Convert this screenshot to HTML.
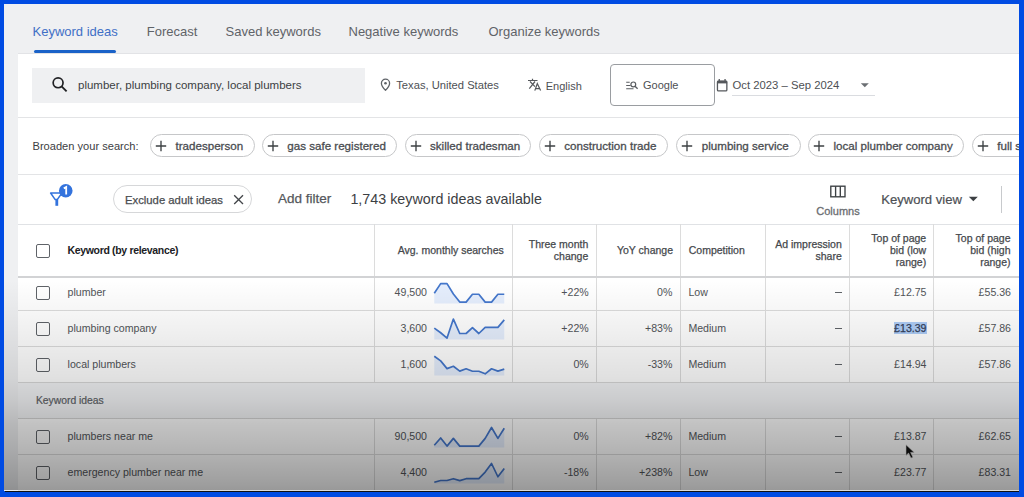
<!DOCTYPE html>
<html><head><meta charset="utf-8"><style>
html,body{margin:0;padding:0;}
body{width:1024px;height:497px;overflow:hidden;position:relative;background:#004be3;font-family:"Liberation Sans", sans-serif;}
.r{position:absolute;}
.t{position:absolute;white-space:nowrap;}
#frame{position:absolute;left:0;top:0;width:1024px;height:497px;overflow:hidden;}
#clip{position:absolute;left:0;top:0;width:1019px;height:490.5px;overflow:hidden;}
#shade{position:absolute;left:4px;top:4px;width:1015px;height:486px;pointer-events:none;
background:linear-gradient(to bottom, rgba(0,0,0,0) 0px, rgba(0,0,0,0) 276px, rgba(0,0,0,0.03) 303px, rgba(0,0,0,0.075) 338px, rgba(0,0,0,0.12) 374px, rgba(0,0,0,0.17) 396px, rgba(0,0,0,0.24) 420px, rgba(0,0,0,0.295) 446px, rgba(0,0,0,0.38) 480px, rgba(0,0,0,0.40) 486px);}
</style></head><body>
<div id="clip">
<div class="r" style="left:4px;top:4px;width:1015px;height:487px;background:#eff0f2;"></div>
<div class="r" style="left:18px;top:54px;width:1001px;height:437px;background:#ffffff;"></div>
<div class="r" style="left:18px;top:52.5px;width:1001px;height:1.5px;background:#e2e3e6;"></div>
<div class="t" style="top:25.00px;font-size:13px;line-height:13px;color:#3f6fc6;left:32.50px;">Keyword ideas</div>
<div class="r" style="left:34px;top:50px;width:82px;height:3px;background:#1a62c8;border-radius:1.5px;"></div>
<div class="t" style="top:25.00px;font-size:13px;line-height:13px;color:#5f6368;left:146.75px;">Forecast</div>
<div class="t" style="top:25.00px;font-size:13px;line-height:13px;color:#5f6368;left:225.50px;">Saved keywords</div>
<div class="t" style="top:25.00px;font-size:13px;line-height:13px;color:#5f6368;left:348.50px;">Negative keywords</div>
<div class="t" style="top:25.00px;font-size:13px;line-height:13px;color:#5f6368;left:488.50px;">Organize keywords</div>
<div class="r" style="left:32px;top:68px;width:333px;height:35px;background:#eff0f2;"></div>
<svg class="r" style="left:50px;top:75px;" width="20" height="20" viewBox="0 0 20 20"><circle cx="8.1" cy="7.8" r="4.95" fill="none" stroke="#202124" stroke-width="1.7"/><line x1="11.6" y1="11.3" x2="16.6" y2="16.3" stroke="#202124" stroke-width="1.9"/></svg>
<div class="t" style="top:79.87px;font-size:11.5px;line-height:11.5px;color:#3c4043;left:78.00px;">plumber, plumbing company, local plumbers</div>
<svg class="r" style="left:379px;top:78.2px;" width="13" height="13" viewBox="0 0 13 13"><path d="M6.5 1.2c-2.3 0-4.1 1.8-4.1 4.1 0 3 4.1 6.9 4.1 6.9s4.1-3.9 4.1-6.9c0-2.3-1.8-4.1-4.1-4.1z" fill="none" stroke="#5f6368" stroke-width="1.3"/><circle cx="6.5" cy="5.3" r="1.3" fill="#5f6368"/></svg>
<div class="t" style="top:80.02px;font-size:11.2px;line-height:11.2px;color:#4d5054;left:396.25px;">Texas, United States</div>
<svg class="r" style="left:528px;top:78px;" width="15" height="15" viewBox="0 0 15 15"><path d="M0 2.5h9.5M4.5 0.8v1.7M2 3.5l5 5.1M7 3.5l-5.7 7.1" fill="none" stroke="#55585c" stroke-width="1.2"/><path d="M6.8 12.6l2.5-7 3.3 7M7.6 10.6h4.2" fill="none" stroke="#55585c" stroke-width="1.2"/></svg>
<div class="t" style="top:80.69px;font-size:11px;line-height:11px;color:#4d5054;left:545.75px;">English</div>
<div class="r" style="left:610px;top:64px;width:103px;height:40px;border:1px solid #9a9da1;border-radius:4px;background:#fff;"></div>
<svg class="r" style="left:625px;top:80px;" width="14" height="11" viewBox="0 0 14 11"><path d="M1.2 2.2h3.5M1.2 5.5h4.3M1.2 8.8h7.3" stroke="#5a5d61" stroke-width="1.1"/><circle cx="8.3" cy="4.4" r="2.4" fill="none" stroke="#5a5d61" stroke-width="1.2"/><line x1="10" y1="6.2" x2="12.6" y2="8.8" stroke="#5a5d61" stroke-width="1.3"/></svg>
<div class="t" style="top:80.09px;font-size:11px;line-height:11px;color:#4d5054;left:643.00px;">Google</div>
<svg class="r" style="left:716px;top:78px;" width="13" height="14" viewBox="0 0 13 14"><rect x="1.45" y="3.1" width="9.4" height="9.8" rx="1" fill="none" stroke="#55585c" stroke-width="1.3"/><rect x="1.2" y="2.8" width="9.9" height="2.6" fill="#55585c"/><rect x="2.6" y="1" width="1.3" height="2.4" fill="#55585c"/><rect x="8.4" y="1" width="1.3" height="2.4" fill="#55585c"/></svg>
<div class="t" style="top:80.13px;font-size:11.3px;line-height:11.3px;color:#4d5054;left:732.50px;">Oct 2023 – Sep 2024</div>
<svg class="r" style="left:860px;top:82px;" width="10" height="6" viewBox="0 0 10 6"><path d="M0.8 1.2h8l-4 4z" fill="#6b6f73"/></svg>
<div class="r" style="left:732px;top:95px;width:143px;height:1px;background:#dadce0;"></div>
<div class="r" style="left:18px;top:116.8px;width:1001px;height:1px;background:#e3e4e6;"></div>
<div class="t" style="top:141.10px;font-size:11.1px;line-height:11.1px;color:#3c4043;left:32.50px;">Broaden your search:</div>
<div class="r" style="left:150px;top:134.3px;width:104.5px;height:22.5px;box-sizing:border-box;border:1px solid #c6c7c9;border-radius:12px;background:#fff;"></div>
<svg class="r" style="left:155.1px;top:140px;" width="12" height="12" viewBox="0 0 12 12"><path d="M6 0.8v10.4M0.8 6h10.4" stroke="#3c4043" stroke-width="1.35"/></svg>
<div class="t" style="top:139.88px;font-size:11.6px;line-height:11.6px;color:#4a4d51;left:175.50px;-webkit-text-stroke:0.3px #4a4d51;">tradesperson</div>
<div class="r" style="left:261.75px;top:134.3px;width:135.25px;height:22.5px;box-sizing:border-box;border:1px solid #c6c7c9;border-radius:12px;background:#fff;"></div>
<svg class="r" style="left:266.85px;top:140px;" width="12" height="12" viewBox="0 0 12 12"><path d="M6 0.8v10.4M0.8 6h10.4" stroke="#3c4043" stroke-width="1.35"/></svg>
<div class="t" style="top:139.88px;font-size:11.6px;line-height:11.6px;color:#4a4d51;left:287.25px;-webkit-text-stroke:0.3px #4a4d51;">gas safe registered</div>
<div class="r" style="left:404.5px;top:134.3px;width:126.75px;height:22.5px;box-sizing:border-box;border:1px solid #c6c7c9;border-radius:12px;background:#fff;"></div>
<svg class="r" style="left:409.6px;top:140px;" width="12" height="12" viewBox="0 0 12 12"><path d="M6 0.8v10.4M0.8 6h10.4" stroke="#3c4043" stroke-width="1.35"/></svg>
<div class="t" style="top:139.88px;font-size:11.6px;line-height:11.6px;color:#4a4d51;left:430.00px;-webkit-text-stroke:0.3px #4a4d51;">skilled tradesman</div>
<div class="r" style="left:538.75px;top:134.3px;width:129.25px;height:22.5px;box-sizing:border-box;border:1px solid #c6c7c9;border-radius:12px;background:#fff;"></div>
<svg class="r" style="left:543.85px;top:140px;" width="12" height="12" viewBox="0 0 12 12"><path d="M6 0.8v10.4M0.8 6h10.4" stroke="#3c4043" stroke-width="1.35"/></svg>
<div class="t" style="top:139.88px;font-size:11.6px;line-height:11.6px;color:#4a4d51;left:564.25px;-webkit-text-stroke:0.3px #4a4d51;">construction trade</div>
<div class="r" style="left:676.25px;top:134.3px;width:124.25px;height:22.5px;box-sizing:border-box;border:1px solid #c6c7c9;border-radius:12px;background:#fff;"></div>
<svg class="r" style="left:681.35px;top:140px;" width="12" height="12" viewBox="0 0 12 12"><path d="M6 0.8v10.4M0.8 6h10.4" stroke="#3c4043" stroke-width="1.35"/></svg>
<div class="t" style="top:139.88px;font-size:11.6px;line-height:11.6px;color:#4a4d51;left:701.75px;-webkit-text-stroke:0.3px #4a4d51;">plumbing service</div>
<div class="r" style="left:808px;top:134.3px;width:156.25px;height:22.5px;box-sizing:border-box;border:1px solid #c6c7c9;border-radius:12px;background:#fff;"></div>
<svg class="r" style="left:813.1px;top:140px;" width="12" height="12" viewBox="0 0 12 12"><path d="M6 0.8v10.4M0.8 6h10.4" stroke="#3c4043" stroke-width="1.35"/></svg>
<div class="t" style="top:139.88px;font-size:11.6px;line-height:11.6px;color:#4a4d51;left:833.50px;-webkit-text-stroke:0.3px #4a4d51;">local plumber company</div>
<div class="r" style="left:971.75px;top:134.3px;width:98.25px;height:22.5px;box-sizing:border-box;border:1px solid #c6c7c9;border-radius:12px;background:#fff;"></div>
<svg class="r" style="left:976.85px;top:140px;" width="12" height="12" viewBox="0 0 12 12"><path d="M6 0.8v10.4M0.8 6h10.4" stroke="#3c4043" stroke-width="1.35"/></svg>
<div class="t" style="top:139.88px;font-size:11.6px;line-height:11.6px;color:#4a4d51;left:997.25px;-webkit-text-stroke:0.3px #4a4d51;">full service plumber</div>
<div class="r" style="left:18px;top:173.5px;width:1001px;height:1px;background:#e3e4e6;"></div>
<svg class="r" style="left:49px;top:182px;" width="26" height="26" viewBox="0 0 26 26"><path d="M1.6 11h11.4l-4.8 6.6h-2z" fill="none" stroke="#3373dd" stroke-width="1.5" stroke-linejoin="round"/><rect x="6.4" y="17.2" width="2.8" height="6.6" fill="#3373dd"/><circle cx="16.75" cy="8.7" r="6.8" fill="#3373dd"/><path d="M14.8 6.4l2.4-1.3v7.4" fill="none" stroke="#fff" stroke-width="1.8"/></svg>
<div class="r" style="left:113px;top:185.2px;width:138.5px;height:27.8px;box-sizing:border-box;border:1px solid #d6d7d9;border-radius:14px;background:#fff;"></div>
<div class="t" style="top:195.03px;font-size:11.3px;line-height:11.3px;color:#4a4d51;left:125.00px;-webkit-text-stroke:0.25px #4a4d51;">Exclude adult ideas</div>
<svg class="r" style="left:232px;top:193px;" width="13" height="13" viewBox="0 0 13 13"><path d="M2.2 2.2l8.8 8.8M11 2.2l-8.8 8.8" stroke="#44474b" stroke-width="1.35"/></svg>
<div class="t" style="top:192.47px;font-size:13.5px;line-height:13.5px;color:#55585c;left:277.90px;-webkit-text-stroke:0.25px #55585c;">Add filter</div>
<div class="t" style="top:191.80px;font-size:14.3px;line-height:14.3px;color:#3c4043;left:350.40px;">1,743 keyword ideas available</div>
<svg class="r" style="left:828px;top:184px;" width="19" height="15" viewBox="0 0 19 15"><rect x="2.8" y="2.2" width="14.2" height="10.6" fill="none" stroke="#3c4043" stroke-width="1.35"/><path d="M7.6 2.2v10.6M12.3 2.2v10.6" stroke="#3c4043" stroke-width="1.35"/></svg>
<div class="t" style="top:206.49px;font-size:11px;line-height:11px;color:#6a6d71;left:816.30px;-webkit-text-stroke:0.3px #6a6d71;">Columns</div>
<div class="t" style="top:192.91px;font-size:13.1px;line-height:13.1px;color:#4d5054;left:881.20px;-webkit-text-stroke:0.2px #4d5054;">Keyword view</div>
<svg class="r" style="left:968px;top:196px;" width="11" height="6" viewBox="0 0 11 6"><path d="M0.8 0.8h9l-4.5 4.5z" fill="#3c4043"/></svg>
<div class="r" style="left:1001px;top:185.5px;width:1px;height:27.5px;background:#c8cacd;"></div>
<div class="r" style="left:18px;top:224px;width:1001px;height:1px;background:#e0e2e5;"></div>
<div class="r" style="left:374.0px;top:224px;width:1px;height:158px;background:#dcdcdc;"></div>
<div class="r" style="left:374.0px;top:418px;width:1px;height:73px;background:#dcdcdc;"></div>
<div class="r" style="left:511.5px;top:224px;width:1px;height:158px;background:#dcdcdc;"></div>
<div class="r" style="left:511.5px;top:418px;width:1px;height:73px;background:#dcdcdc;"></div>
<div class="r" style="left:595.8px;top:224px;width:1px;height:158px;background:#dcdcdc;"></div>
<div class="r" style="left:595.8px;top:418px;width:1px;height:73px;background:#dcdcdc;"></div>
<div class="r" style="left:680.0px;top:224px;width:1px;height:158px;background:#dcdcdc;"></div>
<div class="r" style="left:680.0px;top:418px;width:1px;height:73px;background:#dcdcdc;"></div>
<div class="r" style="left:765.0px;top:224px;width:1px;height:158px;background:#dcdcdc;"></div>
<div class="r" style="left:765.0px;top:418px;width:1px;height:73px;background:#dcdcdc;"></div>
<div class="r" style="left:849.0px;top:224px;width:1px;height:158px;background:#dcdcdc;"></div>
<div class="r" style="left:849.0px;top:418px;width:1px;height:73px;background:#dcdcdc;"></div>
<div class="r" style="left:933.1px;top:224px;width:1px;height:158px;background:#dcdcdc;"></div>
<div class="r" style="left:933.1px;top:418px;width:1px;height:73px;background:#dcdcdc;"></div>
<div class="r" style="left:18px;top:276px;width:1001px;height:2px;background:#d2d3d5;"></div>
<div class="r" style="left:35.75px;top:243.75px;width:13.8px;height:13.8px;box-sizing:border-box;border:1.8px solid #5f6368;border-radius:2px;"></div>
<div class="t" style="top:245.36px;font-size:10.5px;line-height:10.5px;color:#202124;font-weight:700;letter-spacing:-0.33px;left:67.50px;">Keyword (by relevance)</div>
<div class="t" style="top:245.36px;font-size:10.5px;line-height:10.5px;color:#45484c;left:103.75px;width:400px;text-align:right;-webkit-text-stroke:0.25px #45484c;">Avg. monthly searches</div>
<div class="t" style="top:239.11px;font-size:10.5px;line-height:10.5px;color:#45484c;left:188.25px;width:400px;text-align:right;-webkit-text-stroke:0.25px #45484c;">Three month</div>
<div class="t" style="top:251.11px;font-size:10.5px;line-height:10.5px;color:#45484c;left:188.25px;width:400px;text-align:right;-webkit-text-stroke:0.25px #45484c;">change</div>
<div class="t" style="top:245.36px;font-size:10.5px;line-height:10.5px;color:#45484c;left:273.00px;width:400px;text-align:right;-webkit-text-stroke:0.25px #45484c;">YoY change</div>
<div class="t" style="top:245.36px;font-size:10.5px;line-height:10.5px;color:#45484c;left:688.75px;-webkit-text-stroke:0.25px #45484c;">Competition</div>
<div class="t" style="top:239.11px;font-size:10.5px;line-height:10.5px;color:#45484c;left:441.75px;width:400px;text-align:right;-webkit-text-stroke:0.25px #45484c;">Ad impression</div>
<div class="t" style="top:251.11px;font-size:10.5px;line-height:10.5px;color:#45484c;left:441.75px;width:400px;text-align:right;-webkit-text-stroke:0.25px #45484c;">share</div>
<div class="t" style="top:232.51px;font-size:10.5px;line-height:10.5px;color:#45484c;left:526.20px;width:400px;text-align:right;-webkit-text-stroke:0.25px #45484c;">Top of page</div>
<div class="t" style="top:244.81px;font-size:10.5px;line-height:10.5px;color:#45484c;left:526.20px;width:400px;text-align:right;-webkit-text-stroke:0.25px #45484c;">bid (low</div>
<div class="t" style="top:257.11px;font-size:10.5px;line-height:10.5px;color:#45484c;left:526.20px;width:400px;text-align:right;-webkit-text-stroke:0.25px #45484c;">range)</div>
<div class="t" style="top:232.51px;font-size:10.5px;line-height:10.5px;color:#45484c;left:610.50px;width:400px;text-align:right;-webkit-text-stroke:0.25px #45484c;">Top of page</div>
<div class="t" style="top:244.81px;font-size:10.5px;line-height:10.5px;color:#45484c;left:610.50px;width:400px;text-align:right;-webkit-text-stroke:0.25px #45484c;">bid (high</div>
<div class="t" style="top:257.11px;font-size:10.5px;line-height:10.5px;color:#45484c;left:610.50px;width:400px;text-align:right;-webkit-text-stroke:0.25px #45484c;">range)</div>
<div class="r" style="left:18px;top:310px;width:1001px;height:1px;background:#dcdcdc;"></div>
<div class="r" style="left:35.75px;top:285.75px;width:13.8px;height:13.8px;box-sizing:border-box;border:1.8px solid #5f6368;border-radius:2px;"></div>
<div class="t" style="top:287.03px;font-size:10.6px;line-height:10.6px;color:#515458;left:67.60px;">plumber</div>
<div class="t" style="top:287.03px;font-size:10.6px;line-height:10.6px;color:#515458;left:27.00px;width:400px;text-align:right;">49,500</div>
<svg class="r" style="left:430px;top:278px;" width="80" height="34" viewBox="0 0 80 34"><polygon points="4.30,15.20 10.66,5.60 17.02,5.60 23.38,16.00 29.74,24.10 36.10,24.10 42.46,16.25 48.82,16.25 55.18,24.10 61.54,24.10 67.90,16.25 74.26,16.25 74.26,25.60 4.30,25.60" fill="#e5eefd"/><polyline points="4.30,15.20 10.66,5.60 17.02,5.60 23.38,16.00 29.74,24.10 36.10,24.10 42.46,16.25 48.82,16.25 55.18,24.10 61.54,24.10 67.90,16.25 74.26,16.25" fill="none" stroke="#4477cc" stroke-width="1.7" stroke-linejoin="round"/></svg>
<div class="t" style="top:287.03px;font-size:10.6px;line-height:10.6px;color:#515458;left:188.70px;width:400px;text-align:right;">+22%</div>
<div class="t" style="top:287.03px;font-size:10.6px;line-height:10.6px;color:#515458;left:272.40px;width:400px;text-align:right;">0%</div>
<div class="t" style="top:287.03px;font-size:10.6px;line-height:10.6px;color:#515458;left:688.40px;">Low</div>
<div class="r" style="left:834.6px;top:292px;width:7px;height:1.2px;background:#5f6368;"></div>
<div class="t" style="top:287.03px;font-size:10.6px;line-height:10.6px;color:#515458;left:526.50px;width:400px;text-align:right;">£12.75</div>
<div class="t" style="top:287.03px;font-size:10.6px;line-height:10.6px;color:#515458;left:611.00px;width:400px;text-align:right;">£55.36</div>
<div class="r" style="left:18px;top:346px;width:1001px;height:1px;background:#dcdcdc;"></div>
<div class="r" style="left:35.75px;top:321.75px;width:13.8px;height:13.8px;box-sizing:border-box;border:1.8px solid #5f6368;border-radius:2px;"></div>
<div class="t" style="top:323.03px;font-size:10.6px;line-height:10.6px;color:#515458;left:67.60px;">plumbing company</div>
<div class="t" style="top:323.03px;font-size:10.6px;line-height:10.6px;color:#515458;left:27.00px;width:400px;text-align:right;">3,600</div>
<svg class="r" style="left:430px;top:311px;" width="80" height="34" viewBox="0 0 80 34"><polygon points="4.30,17.10 10.66,21.75 17.02,27.10 23.38,8.10 29.74,22.50 36.10,22.50 42.46,16.70 48.82,22.50 55.18,16.40 61.54,16.40 67.90,16.40 74.26,8.90 74.26,28.40 4.30,28.40" fill="#e5eefd"/><polyline points="4.30,17.10 10.66,21.75 17.02,27.10 23.38,8.10 29.74,22.50 36.10,22.50 42.46,16.70 48.82,22.50 55.18,16.40 61.54,16.40 67.90,16.40 74.26,8.90" fill="none" stroke="#4477cc" stroke-width="1.7" stroke-linejoin="round"/></svg>
<div class="t" style="top:323.03px;font-size:10.6px;line-height:10.6px;color:#515458;left:188.70px;width:400px;text-align:right;">+22%</div>
<div class="t" style="top:323.03px;font-size:10.6px;line-height:10.6px;color:#515458;left:272.40px;width:400px;text-align:right;">+83%</div>
<div class="t" style="top:323.03px;font-size:10.6px;line-height:10.6px;color:#515458;left:688.40px;">Medium</div>
<div class="r" style="left:834.6px;top:328px;width:7px;height:1.2px;background:#5f6368;"></div>
<div class="r" style="left:894px;top:322.3px;width:32.5px;height:11.8px;background:#aecdf7;"></div>
<div class="t" style="top:323.03px;font-size:10.6px;line-height:10.6px;color:#33405a;left:526.50px;width:400px;text-align:right;-webkit-text-stroke:0.25px #33405a;">£13.39</div>
<div class="t" style="top:323.03px;font-size:10.6px;line-height:10.6px;color:#515458;left:611.00px;width:400px;text-align:right;">£57.86</div>
<div class="r" style="left:18px;top:382px;width:1001px;height:1px;background:#dcdcdc;"></div>
<div class="r" style="left:35.75px;top:357.75px;width:13.8px;height:13.8px;box-sizing:border-box;border:1.8px solid #5f6368;border-radius:2px;"></div>
<div class="t" style="top:359.03px;font-size:10.6px;line-height:10.6px;color:#515458;left:67.60px;">local plumbers</div>
<div class="t" style="top:359.03px;font-size:10.6px;line-height:10.6px;color:#515458;left:27.00px;width:400px;text-align:right;">1,600</div>
<svg class="r" style="left:430px;top:347px;" width="80" height="34" viewBox="0 0 80 34"><polygon points="4.30,9.25 10.66,13.90 17.02,21.60 23.38,19.25 29.74,24.10 36.10,21.75 42.46,24.25 48.82,24.25 55.18,26.80 61.54,21.75 67.90,24.10 74.26,22.10 74.26,28.40 4.30,28.40" fill="#e5eefd"/><polyline points="4.30,9.25 10.66,13.90 17.02,21.60 23.38,19.25 29.74,24.10 36.10,21.75 42.46,24.25 48.82,24.25 55.18,26.80 61.54,21.75 67.90,24.10 74.26,22.10" fill="none" stroke="#4477cc" stroke-width="1.7" stroke-linejoin="round"/></svg>
<div class="t" style="top:359.03px;font-size:10.6px;line-height:10.6px;color:#515458;left:188.70px;width:400px;text-align:right;">0%</div>
<div class="t" style="top:359.03px;font-size:10.6px;line-height:10.6px;color:#515458;left:272.40px;width:400px;text-align:right;">-33%</div>
<div class="t" style="top:359.03px;font-size:10.6px;line-height:10.6px;color:#515458;left:688.40px;">Medium</div>
<div class="r" style="left:834.6px;top:364px;width:7px;height:1.2px;background:#5f6368;"></div>
<div class="t" style="top:359.03px;font-size:10.6px;line-height:10.6px;color:#515458;left:526.50px;width:400px;text-align:right;">£14.94</div>
<div class="t" style="top:359.03px;font-size:10.6px;line-height:10.6px;color:#515458;left:611.00px;width:400px;text-align:right;">£57.86</div>
<div class="r" style="left:18px;top:454px;width:1001px;height:1px;background:#dcdcdc;"></div>
<div class="r" style="left:35.75px;top:429.75px;width:13.8px;height:13.8px;box-sizing:border-box;border:1.8px solid #5f6368;border-radius:2px;"></div>
<div class="t" style="top:431.03px;font-size:10.6px;line-height:10.6px;color:#515458;left:67.60px;">plumbers near me</div>
<div class="t" style="top:431.03px;font-size:10.6px;line-height:10.6px;color:#515458;left:27.00px;width:400px;text-align:right;">90,500</div>
<svg class="r" style="left:430px;top:419px;" width="80" height="34" viewBox="0 0 80 34"><polygon points="4.30,26.30 10.66,19.00 17.02,27.10 23.38,19.40 29.74,27.10 36.10,27.10 42.46,27.10 48.82,27.10 55.18,19.40 61.54,8.50 67.90,19.40 74.26,9.25 74.26,28.40 4.30,28.40" fill="#e5eefd"/><polyline points="4.30,26.30 10.66,19.00 17.02,27.10 23.38,19.40 29.74,27.10 36.10,27.10 42.46,27.10 48.82,27.10 55.18,19.40 61.54,8.50 67.90,19.40 74.26,9.25" fill="none" stroke="#4477cc" stroke-width="1.7" stroke-linejoin="round"/></svg>
<div class="t" style="top:431.03px;font-size:10.6px;line-height:10.6px;color:#515458;left:188.70px;width:400px;text-align:right;">0%</div>
<div class="t" style="top:431.03px;font-size:10.6px;line-height:10.6px;color:#515458;left:272.40px;width:400px;text-align:right;">+82%</div>
<div class="t" style="top:431.03px;font-size:10.6px;line-height:10.6px;color:#515458;left:688.40px;">Medium</div>
<div class="r" style="left:834.6px;top:436px;width:7px;height:1.2px;background:#5f6368;"></div>
<div class="t" style="top:431.03px;font-size:10.6px;line-height:10.6px;color:#515458;left:526.50px;width:400px;text-align:right;">£13.87</div>
<div class="t" style="top:431.03px;font-size:10.6px;line-height:10.6px;color:#515458;left:611.00px;width:400px;text-align:right;">£62.65</div>
<div class="r" style="left:18px;top:490px;width:1001px;height:1px;background:#dcdcdc;"></div>
<div class="r" style="left:35.75px;top:465.75px;width:13.8px;height:13.8px;box-sizing:border-box;border:1.8px solid #5f6368;border-radius:2px;"></div>
<div class="t" style="top:467.03px;font-size:10.6px;line-height:10.6px;color:#515458;left:67.60px;">emergency plumber near me</div>
<div class="t" style="top:467.03px;font-size:10.6px;line-height:10.6px;color:#515458;left:27.00px;width:400px;text-align:right;">4,400</div>
<svg class="r" style="left:430px;top:455px;" width="80" height="34" viewBox="0 0 80 34"><polygon points="4.30,27.20 10.66,25.50 17.02,25.50 23.38,23.70 29.74,25.65 36.10,23.70 42.46,23.70 48.82,23.70 55.18,17.10 61.54,8.50 67.90,21.75 74.26,13.50 74.26,28.40 4.30,28.40" fill="#e5eefd"/><polyline points="4.30,27.20 10.66,25.50 17.02,25.50 23.38,23.70 29.74,25.65 36.10,23.70 42.46,23.70 48.82,23.70 55.18,17.10 61.54,8.50 67.90,21.75 74.26,13.50" fill="none" stroke="#4477cc" stroke-width="1.7" stroke-linejoin="round"/></svg>
<div class="t" style="top:467.03px;font-size:10.6px;line-height:10.6px;color:#515458;left:188.70px;width:400px;text-align:right;">-18%</div>
<div class="t" style="top:467.03px;font-size:10.6px;line-height:10.6px;color:#515458;left:272.40px;width:400px;text-align:right;">+238%</div>
<div class="t" style="top:467.03px;font-size:10.6px;line-height:10.6px;color:#515458;left:688.40px;">Low</div>
<div class="r" style="left:834.6px;top:472px;width:7px;height:1.2px;background:#5f6368;"></div>
<div class="t" style="top:467.03px;font-size:10.6px;line-height:10.6px;color:#515458;left:526.50px;width:400px;text-align:right;">£23.77</div>
<div class="t" style="top:467.03px;font-size:10.6px;line-height:10.6px;color:#515458;left:611.00px;width:400px;text-align:right;">£83.31</div>
<div class="r" style="left:18px;top:382px;width:1001px;height:36.5px;background:#f4f5f7;"></div>
<div class="r" style="left:18px;top:382px;width:1001px;height:1px;background:#d9d9d9;"></div>
<div class="r" style="left:18px;top:418px;width:1001px;height:1px;background:#d6d6d6;"></div>
<div class="t" style="top:396.24px;font-size:10.35px;line-height:10.35px;color:#606367;left:35.90px;-webkit-text-stroke:0.2px #606367;">Keyword ideas</div>
<svg class="r" style="left:904px;top:443px;" width="16" height="18" viewBox="0 0 16 18"><path d="M2 1.8v10.6l2.6-2.3 2.4 5 1.9-0.9-2.3-4.8h3.6z" fill="#111" stroke="#ddd" stroke-width="0.6"/></svg>
<div id="shade"></div>
</div>
<div class="r" style="left:4.5px;top:490.5px;width:1014px;height:1.5px;background:#111;"></div>
</body></html>
